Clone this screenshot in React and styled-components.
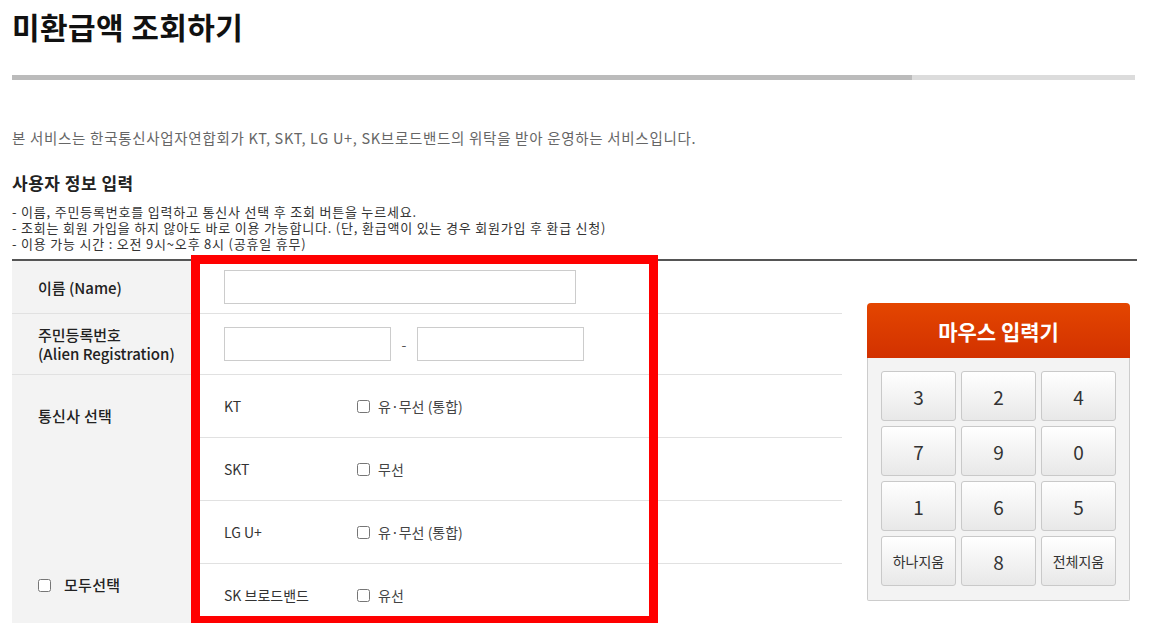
import React from "react"
import styled, { createGlobalStyle } from "styled-components"

const GlobalStyle = createGlobalStyle`
  html, body {
    margin: 0;
    padding: 0;
    background: #fff;
  }
  body {
    font-family: "Noto Sans CJK KR", "Noto Sans", sans-serif;
    color: #333;
  }
`

const Page = styled.div`
  position: relative;
  padding: 0 15px 0 12px;
  height: 623px;
  overflow: hidden;
`

const Title = styled.h1`
  margin: 6px 0 0;
  font-size: 30px;
  line-height: 40px;
  font-weight: 700;
  color: #111;
  letter-spacing: 0.4px;
`

const Bar = styled.div`
  display: flex;
  width: 1123px;
  height: 5px;
  margin-top: 29px;
  background: #dcdcdc;
`

const BarFill = styled.div`
  width: 900px;
  background: #bbbbbb;
`

const Intro = styled.p`
  margin: 48px 0 0;
  font-size: 14.5px;
  line-height: 20px;
  letter-spacing: 0.7px;
  color: #666;
`

const SubTitle = styled.h2`
  margin: 23px 0 0;
  font-size: 17px;
  line-height: 24px;
  font-weight: 700;
  letter-spacing: 0.5px;
  color: #222;
`

const Notes = styled.ul`
  list-style: none;
  margin: 9px 0 0;
  padding: 0;
  font-size: 13px;
  line-height: 16px;
  letter-spacing: 0.8px;
  color: #333;
`

const Frame = styled.div`
  display: flex;
  margin-top: 7px;
  border-top: 2px solid #555;
`

const Table = styled.div`
  width: 830px;
  flex-shrink: 0;
`

const Row = styled.div`
  display: flex;
  min-height: ${({ h }) => h}px;
  border-bottom: 1px solid #e1e1e1;
`

const Label = styled.div`
  width: 154px;
  flex-shrink: 0;
  padding-left: 26px;
  background: #f3f3f3;
  display: flex;
  flex-direction: column;
  justify-content: center;
  font-size: 15px;
  line-height: 19px;
  font-weight: 500;
  color: #222;
`

const Cell = styled.div`
  flex: 1;
  display: flex;
  align-items: center;
  padding-left: 32px;
`

const TextInput = styled.input`
  box-sizing: border-box;
  width: ${({ w }) => w}px;
  height: 34px;
  margin: 0;
  border: 1px solid #ccc;
  background: #fff;
  outline: none;
`

const Dash = styled.span`
  width: 26px;
  text-align: center;
  font-size: 14px;
  color: #555;
`

const CarrierBlock = styled.div`
  display: flex;
`

const CarrierLabel = styled.div`
  width: 154px;
  flex-shrink: 0;
  padding: 31px 0 32px 26px;
  background: #f3f3f3;
  display: flex;
  flex-direction: column;
  justify-content: space-between;
  font-size: 15px;
  line-height: 20px;
  font-weight: 500;
  letter-spacing: 0.3px;
  color: #222;
`

const AllCheck = styled.label`
  display: flex;
  align-items: center;
  gap: 13px;
`

const CarrierList = styled.div`
  flex: 1;
`

const CarrierRow = styled.div`
  display: flex;
  align-items: center;
  height: 62px;
  padding-left: 32px;
  border-bottom: 1px solid #e1e1e1;
  font-size: 14px;
`

const CarrierName = styled.span`
  width: 133px;
  font-weight: 400;
  color: #333;
`

const Option = styled.label`
  display: flex;
  align-items: center;
  gap: 8px;
  color: #444;
`

const Box = styled.input`
  margin: 0;
  width: 13px;
  height: 13px;
`

const Side = styled.div`
  margin: 42px 0 0 25px;
  width: 263px;
`

const PadHead = styled.div`
  height: 55px;
  border-radius: 4px 4px 0 0;
  background: linear-gradient(#e44600, #d23100);
  display: flex;
  align-items: center;
  justify-content: center;
  color: #fff;
  font-size: 21px;
  font-weight: 700;
`

const PadBody = styled.div`
  display: grid;
  grid-template-columns: repeat(3, 75px);
  grid-auto-rows: 50px;
  gap: 5px;
  padding: 13px 13px 14px;
  background: #f3f3f3;
  border: 1px solid #ccc;
  border-top: none;
  border-radius: 0 0 2px 2px;
`

const Key = styled.button`
  margin: 0;
  padding: 0;
  border: 1px solid #c9c9c9;
  border-radius: 3px;
  background: linear-gradient(#ffffff, #e8e8e8);
  font-family: inherit;
  color: #333;
  font-size: ${({ small }) => (small ? "14px" : "19px")};
  cursor: pointer;
`

const Highlight = styled.div`
  position: absolute;
  left: 191px;
  top: 255px;
  width: 467px;
  height: 370px;
  box-sizing: border-box;
  border: 9px solid #ff0000;
  pointer-events: none;
`

const carriers = [
  { name: "KT", option: "유·무선 (통합)" },
  { name: "SKT", option: "무선" },
  { name: "LG U+", option: "유·무선 (통합)" },
  { name: "SK 브로드밴드", option: "유선" },
]

const keys = ["3", "2", "4", "7", "9", "0", "1", "6", "5", "하나지움", "8", "전체지움"]

export default function App() {
  return (
    <Page>
      <GlobalStyle />
      <Title>미환급액 조회하기</Title>
      <Bar>
        <BarFill />
      </Bar>
      <Intro>본 서비스는 한국통신사업자연합회가 KT, SKT, LG U+, SK브로드밴드의 위탁을 받아 운영하는 서비스입니다.</Intro>
      <SubTitle>사용자 정보 입력</SubTitle>
      <Notes>
        <li>- 이름, 주민등록번호를 입력하고 통신사 선택 후 조회 버튼을 누르세요.</li>
        <li>- 조회는 회원 가입을 하지 않아도 바로 이용 가능합니다. (단, 환급액이 있는 경우 회원가입 후 환급 신청)</li>
        <li>- 이용 가능 시간 : 오전 9시~오후 8시 (공휴일 휴무)</li>
      </Notes>
      <Frame>
        <Table>
          <Row h={52}>
            <Label>이름 (Name)</Label>
            <Cell>
              <TextInput w={352} />
            </Cell>
          </Row>
          <Row h={60}>
            <Label>
              <div>주민등록번호</div>
              <div>(Alien Registration)</div>
            </Label>
            <Cell>
              <TextInput w={167} />
              <Dash>-</Dash>
              <TextInput w={167} />
            </Cell>
          </Row>
          <CarrierBlock>
            <CarrierLabel>
              <div>통신사 선택</div>
              <AllCheck>
                <Box type="checkbox" />
                모두선택
              </AllCheck>
            </CarrierLabel>
            <CarrierList>
              {carriers.map((c) => (
                <CarrierRow key={c.name}>
                  <CarrierName>{c.name}</CarrierName>
                  <Option>
                    <Box type="checkbox" />
                    {c.option}
                  </Option>
                </CarrierRow>
              ))}
            </CarrierList>
          </CarrierBlock>
        </Table>
        <Side>
          <PadHead>마우스 입력기</PadHead>
          <PadBody>
            {keys.map((k) => (
              <Key key={k} small={k.length > 1}>{k}</Key>
            ))}
          </PadBody>
        </Side>
      </Frame>
      <Highlight />
    </Page>
  )
}
